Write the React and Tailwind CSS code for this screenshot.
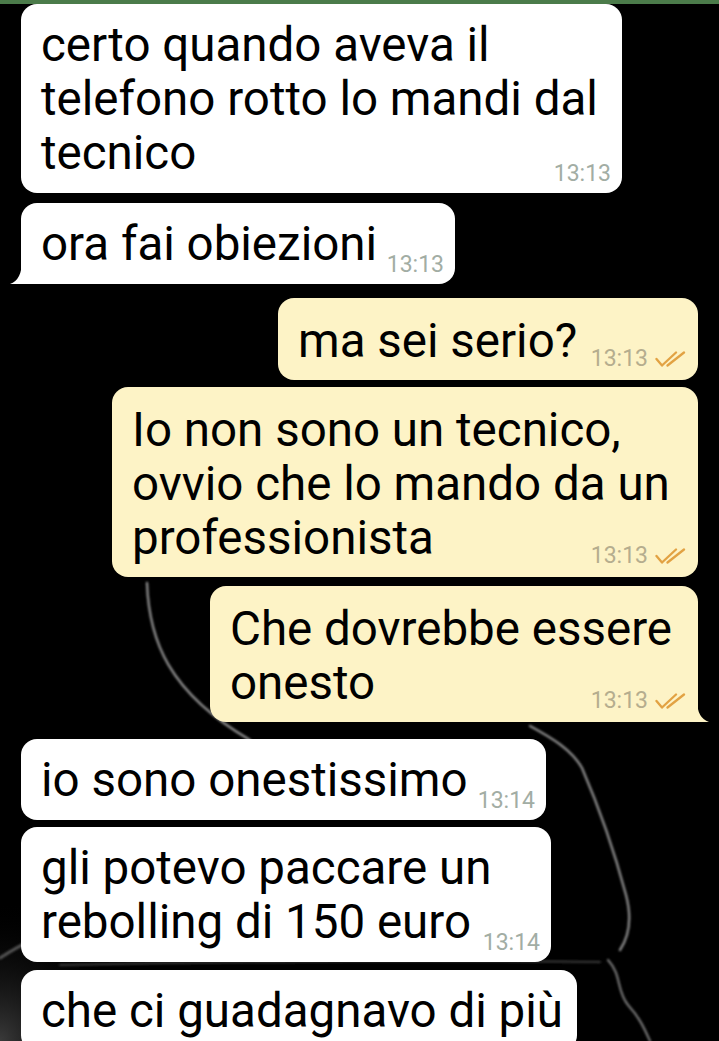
import React from "react";

function Check() {
  return (
    <svg width="31" height="16" viewBox="0 0 31 16" fill="none" stroke="#e2a243" strokeWidth="2.3" strokeLinecap="round" strokeLinejoin="round">
      <path d="M1.5 8 L7 14.5 L21 1.5" />
      <path d="M12.5 14.5 L29 1.5" />
    </svg>
  );
}

function TailLeft() {
  return (
    <svg className="absolute left-[-11px] bottom-0" width="12" height="24" viewBox="0 0 12 24">
      <path d="M12 0 Q12 20 0 24 L12 24 Z" fill="#ffffff" />
    </svg>
  );
}

function TailRight() {
  return (
    <svg className="absolute right-[-11px] bottom-0" width="12" height="22" viewBox="0 0 12 22">
      <path d="M0 0 Q0 18 12 22 L0 22 Z" fill="#fdf3c6" />
    </svg>
  );
}

function Received({ lines, time, className, tail }) {
  return (
    <div className={`relative self-start bg-white pt-[14px] pb-[7px] pl-[20px] pr-[11px] ${className}`}>
      <div className="grid">
        <div className="[grid-area:1/1] pb-[6px] text-[47.5px] leading-[54px] text-black">
          {lines.map((l, i) => (
            <div key={i} className="whitespace-nowrap">{l}</div>
          ))}
        </div>
        {time && (
          <div className="[grid-area:1/1] self-end justify-self-end text-[23px] leading-[24px] text-[#a2ada4]">
            {time}
          </div>
        )}
      </div>
      {tail && <TailLeft />}
    </div>
  );
}

function Sent({ lines, time, className, tail }) {
  return (
    <div className={`relative self-end bg-[#fdf3c6] pt-[16px] pb-[9px] pl-[20px] pr-[12px] ${className}`}>
      <div className="grid">
        <div className="[grid-area:1/1] pb-[3px] text-[47.5px] leading-[54px] text-black">
          {lines.map((l, i) => (
            <div key={i} className="whitespace-nowrap">{l}</div>
          ))}
        </div>
        <div className="[grid-area:1/1] self-end justify-self-end flex items-center gap-[7px]">
          <span className="text-[23px] leading-[24px] text-[#b5ad8e]">{time}</span>
          <Check />
        </div>
      </div>
      {tail && <TailRight />}
    </div>
  );
}

export default function App() {
  return (
    <div className="relative h-[1041px] w-[719px] overflow-hidden bg-black [font-family:Roboto,'Liberation_Sans',sans-serif]">
      <svg className="pointer-events-none absolute inset-0" width="719" height="1041" viewBox="0 0 719 1041">
        <defs>
          <filter id="blur" x="-20%" y="-20%" width="140%" height="140%">
            <feGaussianBlur stdDeviation="1.2" />
          </filter>
          <radialGradient id="haze" cx="0" cy="1" r="1">
            <stop offset="0" stopColor="#3a3a3a" />
            <stop offset="1" stopColor="#000000" stopOpacity="0" />
          </radialGradient>
        </defs>
        <rect x="0" y="900" width="120" height="141" fill="url(#haze)" />
        <g filter="url(#blur)" fill="none" strokeLinecap="round">
          <path d="M147 583 C149 640 168 692 250 740" stroke="#8d8d8d" strokeWidth="2.4" />
          <path d="M530 726 C552 738 572 750 582 768 C598 805 614 850 626 895 C632 918 630 935 620 950" stroke="#8a8a8a" strokeWidth="2.4" />
          <path d="M608 960 C622 975 616 990 628 1005 C640 1018 645 1030 650 1041" stroke="#777" strokeWidth="2.2" />
          <path d="M0 958 C20 945 40 935 60 930" stroke="#555" strokeWidth="3" />
          <path d="M60 965 C200 962 420 960 600 962" stroke="#3a3a3a" strokeWidth="2" />
        </g>
      </svg>

      <div className="relative flex flex-col px-[21px]">
        <div className="-mx-[21px] h-[4px] bg-[#4b7b4a]" />
        <Received
          className="w-[601px] rounded-[16px]"
          lines={["certo quando aveva il", "telefono rotto lo mandi dal", "tecnico"]}
          time="13:13"
        />
        <Received
          className="mt-[10px] w-[434px] rounded-[16px] rounded-bl-none"
          lines={["ora fai obiezioni"]}
          time="13:13"
          tail
        />
        <Sent
          className="mt-[14px] w-[420px] rounded-[16px]"
          lines={["ma sei serio?"]}
          time="13:13"
        />
        <Sent
          className="mt-[7px] w-[586px] rounded-[16px]"
          lines={["Io non sono un tecnico,", "ovvio che lo mando da un", "professionista"]}
          time="13:13"
        />
        <Sent
          className="mt-[9px] w-[488px] rounded-[16px] rounded-br-none"
          lines={["Che dovrebbe essere", "onesto"]}
          time="13:13"
          tail
        />
        <Received
          className="mt-[17px] w-[525px] rounded-[16px]"
          lines={["io sono onestissimo"]}
          time="13:14"
        />
        <Received
          className="mt-[7px] w-[530px] rounded-[16px]"
          lines={["gli potevo paccare un", "rebolling di 150 euro"]}
          time="13:14"
        />
        <Received
          className="mt-[8px] w-[556px] rounded-[16px]"
          lines={["che ci guadagnavo di più"]}
        />
      </div>
    </div>
  );
}
